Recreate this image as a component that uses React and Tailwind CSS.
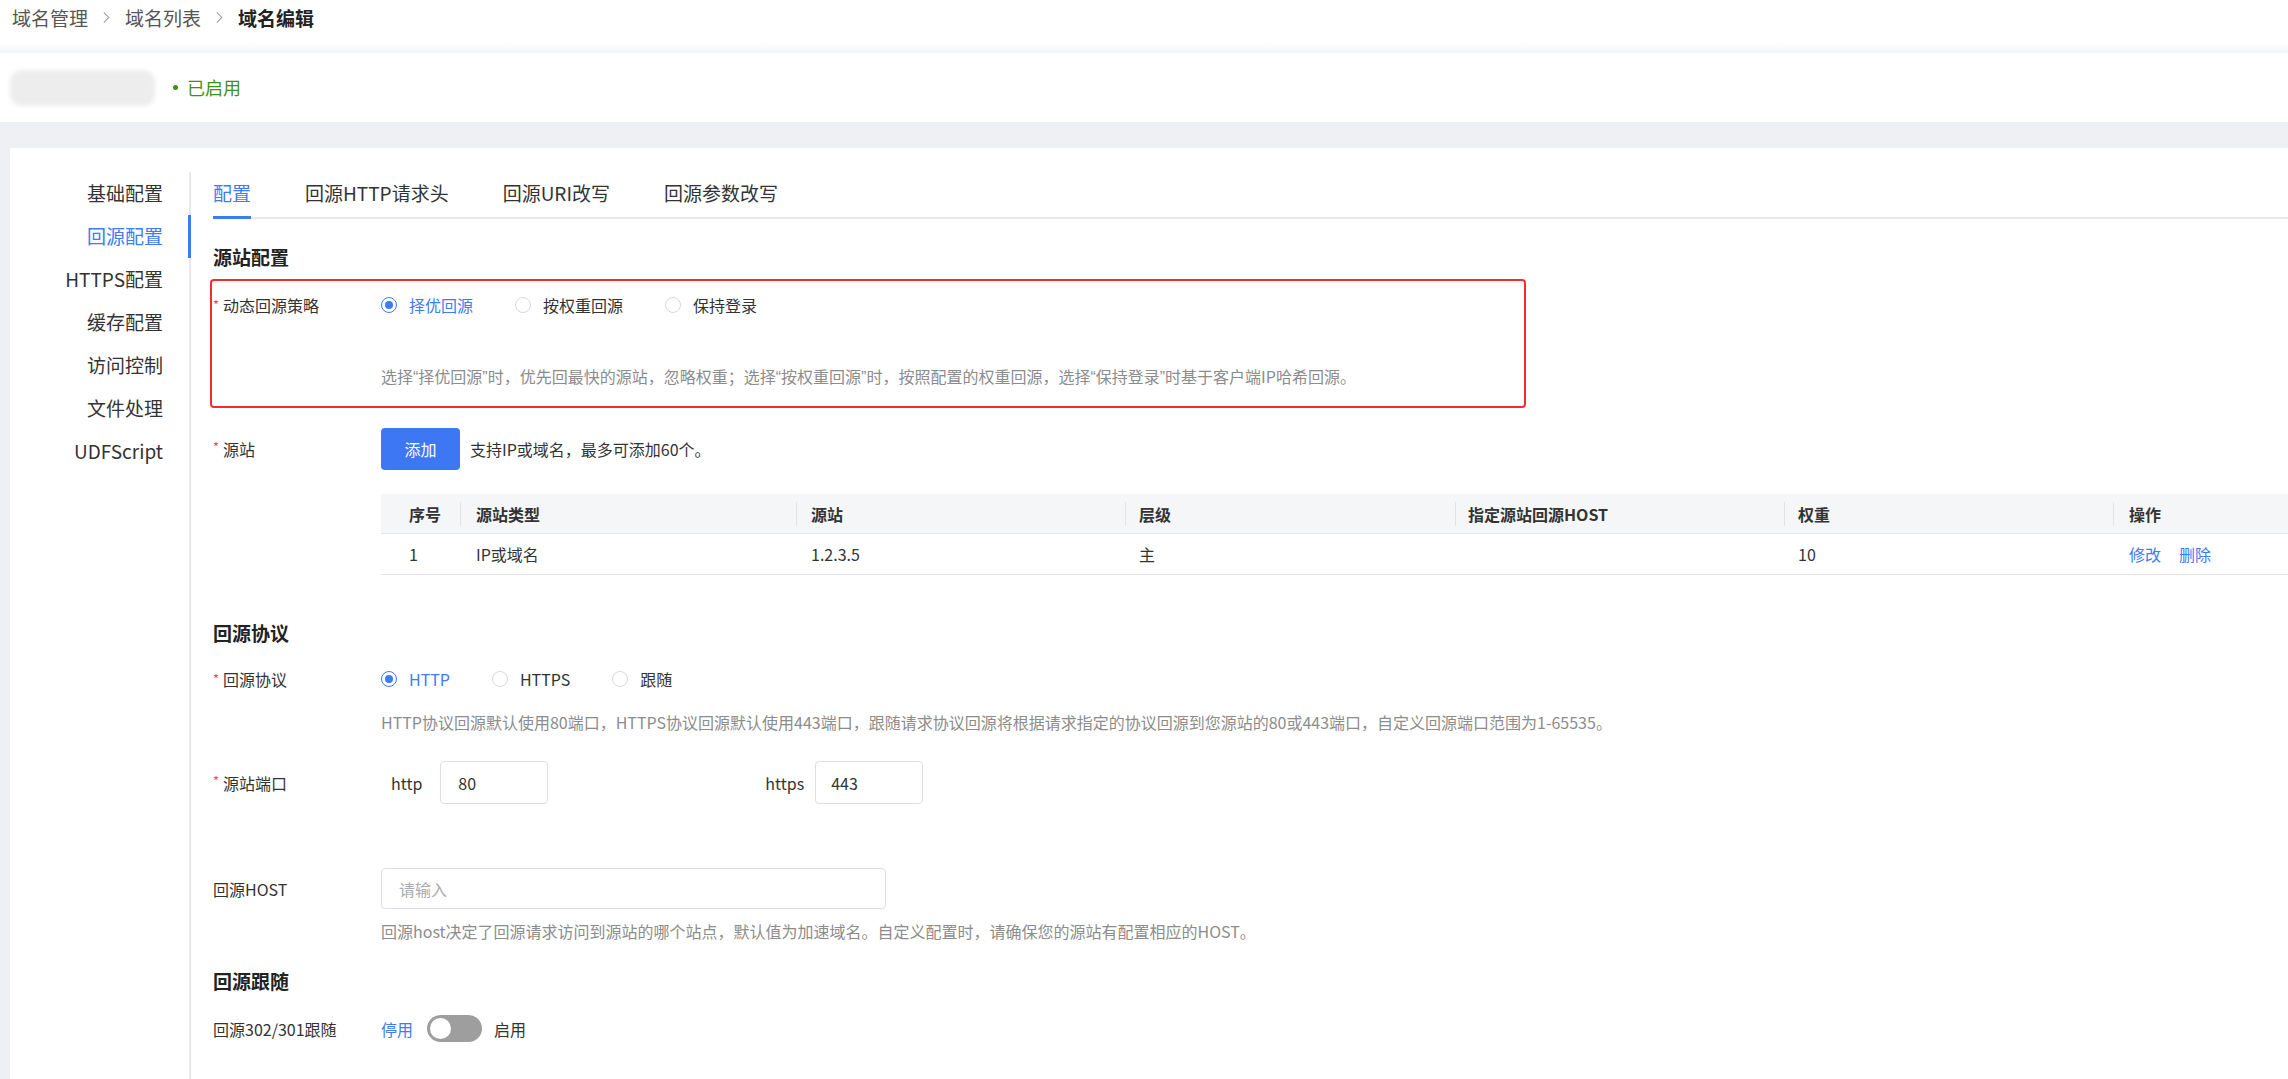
import { ChevronRight } from 'lucide-react'

const navItems = ['基础配置', '回源配置', 'HTTPS配置', '缓存配置', '访问控制', '文件处理', 'UDFScript']
const tabs = ['配置', '回源HTTP请求头', '回源URI改写', '回源参数改写']

function Radio({ checked, label }) {
  return (
    <div className="flex items-center">
      {checked ? (
        <span className="w-[16px] h-[16px] rounded-full border-[1.5px] border-[#3d7bf7] flex items-center justify-center">
          <span className="w-[8px] h-[8px] rounded-full bg-[#3d7bf7]" />
        </span>
      ) : (
        <span className="w-[16px] h-[16px] rounded-full border border-[#d9d9d9] bg-white" />
      )}
      <span className={`ml-[12px] ${checked ? 'text-[#3d7bf7]' : 'text-[#333]'}`}>{label}</span>
    </div>
  )
}

function Label({ children, required }) {
  return (
    <div className="w-[168px] shrink-0 text-[#333]">
      {required && <span className="text-[#f04a4a] mr-[4px] text-[13px] align-top">*</span>}
      {children}
    </div>
  )
}

function Heading({ children, className }) {
  return <div className={`text-[19px] leading-[26px] font-bold text-[#222] ${className}`}>{children}</div>
}

function Help({ children, className }) {
  return <div className={`text-[16px] leading-[24px] h-[24px] text-[#8c8c8c] ${className}`}>{children}</div>
}

// narrow curly quotes like the reference font
function Q({ children }) {
  return <span className="font-['Liberation_Sans',sans-serif] leading-none">{children}</span>
}

export default function App() {
  const cols = [
    { title: '序号', w: 'w-[79px] pl-[28px]', v: '1' },
    { title: '源站类型', w: 'w-[336px] pl-[16px]', v: 'IP或域名' },
    { title: '源站', w: 'w-[329px] pl-[15px]', v: '1.2.3.5' },
    { title: '层级', w: 'w-[330px] pl-[14px]', v: '主' },
    { title: '指定源站回源HOST', w: 'w-[329px] pl-[13px]', v: '' },
    { title: '权重', w: 'w-[329px] pl-[14px]', v: '10' },
    { title: '操作', w: 'flex-1 pl-[16px]', v: null },
  ]

  return (
    <div className="min-h-screen bg-[#eef0f4] font-['Noto_Sans_CJK_SC',sans-serif] text-[16px] text-[#333]">
      {/* 面包屑 */}
      <div className="h-[53px] bg-linear-to-b from-white from-80% to-[#f4f5f7] pl-[12px] pt-[4px]">
        <div className="flex items-center gap-[9px] text-[19px] leading-[27px]">
          <span className="text-[#555]">域名管理</span>
          <ChevronRight size={19} strokeWidth={1.3} color="#888" />
          <span className="text-[#555]">域名列表</span>
          <ChevronRight size={19} strokeWidth={1.3} color="#888" />
          <span className="font-bold text-[#222]">域名编辑</span>
        </div>
      </div>

      {/* 域名头部 */}
      <div className="h-[69px] bg-white flex items-center pl-[10px]">
        <div className="w-[145px] h-[36px] rounded-[12px] bg-[#ededed] blur-[2px]" />
        <span className="ml-[18px] w-[5px] h-[5px] rounded-full bg-[#3f8f1c]" />
        <span className="ml-[9px] text-[18px] text-[#3f8f1c]">已启用</span>
      </div>

      <div className="pt-[26px] pl-[10px]">
        <div className="bg-white flex h-[931px] overflow-hidden">
          {/* 侧边导航 */}
          <div className="w-[181px] shrink-0 mt-[24px] border-r-2 border-[#e6e8ee] h-[907px]">
            {navItems.map((item, i) => (
              <div key={item} className="relative h-[43px] flex items-center justify-end pr-[26px] text-[19px]">
                <span className={i === 1 ? 'text-[#3d7bf7]' : 'text-[#333]'}>{item}</span>
                {i === 1 && <span className="absolute right-[-2px] top-0 w-[3px] h-[43px] bg-[#3d7bf7]" />}
              </div>
            ))}
          </div>

          {/* 主体 */}
          <div className="flex-1 pt-[32px] pl-[22px]">
            <div className="flex gap-[54px] border-b-2 border-[#e6e8ee] text-[19px] leading-[26px]">
              {tabs.map((t, i) => (
                <div
                  key={t}
                  className={`pb-[10px] -mb-[2px] border-b-[3px] ${i === 0 ? 'border-[#3d7bf7] text-[#3d7bf7]' : 'border-transparent text-[#333]'}`}
                >
                  {t}
                </div>
              ))}
            </div>

            <Heading className="mt-[25px]">源站配置</Heading>

            {/* 动态回源策略（红框标注） */}
            <div className="mt-[9px] -ml-[3px] w-[1316px] border-2 border-[#f52c2c] rounded-[4px] pl-[1px] pt-[12px] pb-[18px] leading-[24px]">
              <div className="flex">
                <Label required>动态回源策略</Label>
                <div className="flex flex-col">
                  <div className="flex gap-[42px] h-[24px]">
                    <Radio checked label="择优回源" />
                    <Radio label="按权重回源" />
                    <Radio label="保持登录" />
                  </div>
                  <Help className="mt-[47px]">
                    选择<Q>“</Q>择优回源<Q>”</Q>时，优先回最快的源站，忽略权重；选择<Q>“</Q>按权重回源<Q>”</Q>时，按照配置的权重回源，选择<Q>“</Q>保持登录<Q>”</Q>时基于客户端IP哈希回源。
                  </Help>
                </div>
              </div>
            </div>

            {/* 源站 */}
            <div className="flex items-center mt-[20px]">
              <Label required>源站</Label>
              <button className="w-[79px] h-[42px] rounded-[4px] bg-[#3d77f3] text-white">添加</button>
              <span className="ml-[10px]">支持IP或域名，最多可添加60个。</span>
            </div>

            <div className="ml-[168px] mt-[24px]">
              <div className="flex h-[40px] items-center bg-[#f5f6f8] border-b border-[#e3e5ea] font-semibold text-[#333]">
                {cols.map((c, i) => (
                  <div key={c.title} className={`${c.w} relative h-full flex items-center`}>
                    {i > 0 && <span className="absolute left-0 top-[8px] h-[24px] w-px bg-[#e1e3e8]" />}
                    {c.title}
                  </div>
                ))}
              </div>
              <div className="flex h-[41px] items-center border-b border-[#e3e5ea]">
                {cols.map((c) => (
                  <div key={c.title} className={`${c.w} flex items-center`}>
                    {c.v === null ? (
                      <span className="flex gap-[18px] text-[#3d7bf7]">
                        <span>修改</span>
                        <span>删除</span>
                      </span>
                    ) : (
                      c.v
                    )}
                  </div>
                ))}
              </div>
            </div>

            <Heading className="mt-[45px]">回源协议</Heading>

            <div className="flex mt-[21px] leading-[24px]">
              <Label required>回源协议</Label>
              <div className="flex flex-col">
                <div className="flex gap-[42px] h-[24px]">
                  <Radio checked label="HTTP" />
                  <Radio label="HTTPS" />
                  <Radio label="跟随" />
                </div>
                <Help className="mt-[19px]">
                  HTTP协议回源默认使用80端口，HTTPS协议回源默认使用443端口，跟随请求协议回源将根据请求指定的协议回源到您源站的80或443端口，自定义回源端口范围为1-65535。
                </Help>
              </div>
            </div>

            <div className="flex items-center mt-[27px]">
              <Label required>源站端口</Label>
              <span className="ml-[10px]">http</span>
              <div className="ml-[18px] w-[108px] h-[43px] border border-[#dcdfe6] rounded-[4px] flex items-center pl-[17px]">80</div>
              <span className="ml-[217px]">https</span>
              <div className="ml-[11px] w-[108px] h-[43px] border border-[#dcdfe6] rounded-[4px] flex items-center pl-[15px]">443</div>
            </div>

            <div className="flex mt-[64px]">
              <Label>
                <div className="h-[41px] flex items-center">回源HOST</div>
              </Label>
              <div className="flex flex-col">
                <div className="w-[505px] h-[41px] border border-[#dcdfe6] rounded-[4px] flex items-center pl-[17px] text-[#a8abb2]">请输入</div>
                <Help className="mt-[10px]">
                  回源host决定了回源请求访问到源站的哪个站点，默认值为加速域名。自定义配置时，请确保您的源站有配置相应的HOST。
                </Help>
              </div>
            </div>

            <Heading className="mt-[25px]">回源跟随</Heading>

            <div className="flex items-center mt-[21px]">
              <Label>回源302/301跟随</Label>
              <span className="text-[#3d7bf7]">停用</span>
              <span className="ml-[14px] w-[55px] h-[27px] rounded-full bg-[#9e9e9e] flex items-center pl-[3px]">
                <span className="w-[21px] h-[21px] rounded-full bg-white" />
              </span>
              <span className="ml-[12px]">启用</span>
            </div>
          </div>
        </div>
      </div>
    </div>
  )
}
